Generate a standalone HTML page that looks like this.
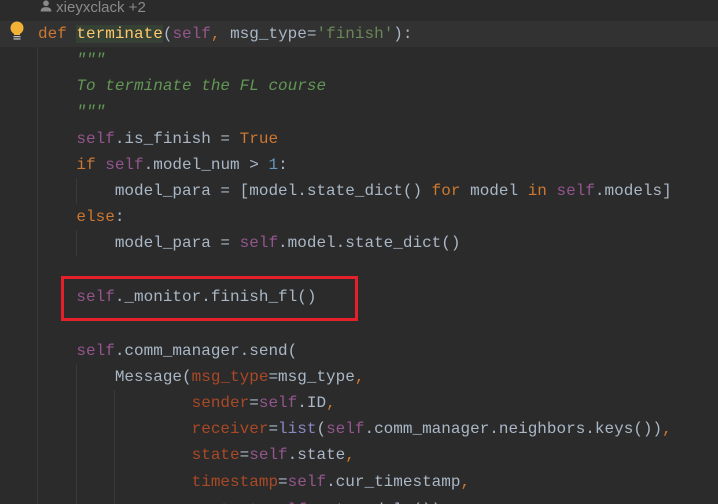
<!DOCTYPE html>
<html><head><meta charset="utf-8"><style>
html,body{margin:0;width:718px;height:504px;overflow:hidden}
body{background:#2b2b2b;position:relative;font-family:"Liberation Mono",monospace;font-size:16px;color:#a9b7c6}
.l{position:absolute;left:38px;white-space:pre;height:26px;line-height:26px}
.k{color:#cc7832}.s{color:#94558d}.f{color:#ffc66d;background:#344134}.str{color:#6a8759}
.d{color:#629755;font-style:italic}.p{color:#aa4926}.n{color:#6897bb}.b{color:#8888c6}
.g{position:absolute;width:1px;background:#393939}
</style></head><body>
<div style="position:absolute;left:0;top:21px;width:718px;height:26px;background:#323232"></div>
<div class="g" style="left:37px;top:47px;height:457px"></div>
<div class="g" style="left:76px;top:178px;height:26px"></div>
<div class="g" style="left:76px;top:230px;height:26px"></div>
<div class="g" style="left:76px;top:364px;height:140px"></div>
<div class="g" style="left:114px;top:390px;height:114px"></div>
<div style="position:absolute;left:40px;top:-1px;font-family:'Liberation Sans',sans-serif;font-size:15px;color:#8a8a8a;line-height:18px">
<svg width="12" height="12" viewBox="0 0 11 11" style="vertical-align:0px"><circle cx="5.5" cy="3" r="2.6" fill="#8a8a8a"/><path d="M0.5 10.5 Q0.5 6.5 5.5 6.5 Q10.5 6.5 10.5 10.5Z" fill="#8a8a8a"/></svg> xieyxclack +2</div>
<svg style="position:absolute;left:9px;top:21px" width="16" height="20" viewBox="0 0 16 20"><circle cx="8" cy="7" r="6.5" fill="#f2b236"/><rect x="5" y="12" width="6" height="2" fill="#f2b236"/><rect x="4.5" y="15" width="7" height="1.3" fill="#bbb"/><rect x="4.5" y="17.3" width="7" height="1.3" fill="#bbb"/></svg>
<div class="l" style="top:21px"><span class="k">def</span> <span class="f">terminate</span>(<span class="s">self</span><span class="k">,</span> msg_type=<span class="str">'finish'</span>):</div>
<div class="l" style="top:47px">    <span class="d">"""</span></div>
<div class="l" style="top:73px">    <span class="d">To terminate the FL course</span></div>
<div class="l" style="top:99px">    <span class="d">"""</span></div>
<div class="l" style="top:126px">    <span class="s">self</span>.is_finish = <span class="k">True</span></div>
<div class="l" style="top:152px">    <span class="k">if</span> <span class="s">self</span>.model_num &gt; <span class="n">1</span>:</div>
<div class="l" style="top:178px">        model_para = [model.state_dict() <span class="k">for</span> model <span class="k">in</span> <span class="s">self</span>.models]</div>
<div class="l" style="top:204px">    <span class="k">else</span>:</div>
<div class="l" style="top:230px">        model_para = <span class="s">self</span>.model.state_dict()</div>
<div class="l" style="top:284px">    <span class="s">self</span>._monitor.finish_fl()</div>
<div style="position:absolute;left:61px;top:276px;width:291px;height:39px;border:3px solid #e5202a"></div>
<div class="l" style="top:338px">    <span class="s">self</span>.comm_manager.send(</div>
<div class="l" style="top:364px">        Message(<span class="p">msg_type</span>=msg_type<span class="k">,</span></div>
<div class="l" style="top:390px">                <span class="p">sender</span>=<span class="s">self</span>.ID<span class="k">,</span></div>
<div class="l" style="top:416px">                <span class="p">receiver</span>=<span class="b">list</span>(<span class="s">self</span>.comm_manager.neighbors.keys())<span class="k">,</span></div>
<div class="l" style="top:442px">                <span class="p">state</span>=<span class="s">self</span>.state<span class="k">,</span></div>
<div class="l" style="top:469px">                <span class="p">timestamp</span>=<span class="s">self</span>.cur_timestamp<span class="k">,</span></div>
<div class="l" style="top:497px">                <span class="p">content</span>=<span class="s">self</span>.get_models())</div>
</body></html>
